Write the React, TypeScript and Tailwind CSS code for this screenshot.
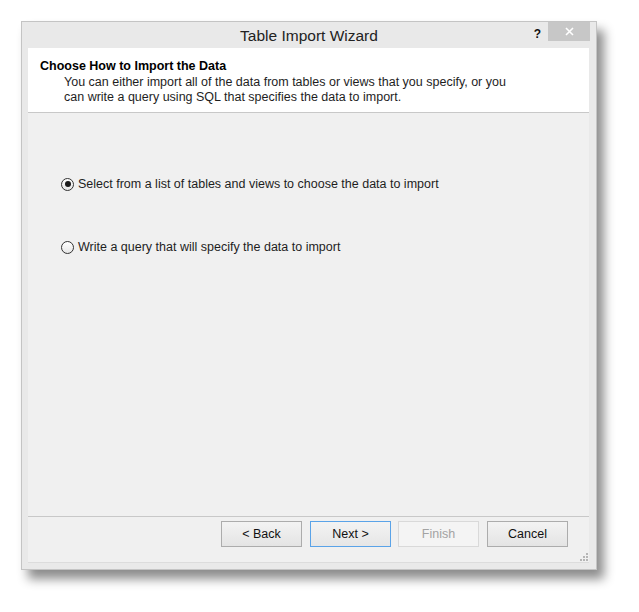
import * as React from "react"

const font = { fontFamily: '"Liberation Sans", "Noto Sans CJK SC", sans-serif' }

function Radio({ checked, label }: { checked?: boolean; label: string }) {
  return (
    <div className="flex items-center h-[16px]">
      <span className="w-[13px] h-[13px] rounded-full border border-[#333333] bg-gradient-to-b from-[#ffffff] to-[#e6e6e6] flex items-center justify-center">
        {checked && <span className="w-[6px] h-[6px] rounded-full bg-[#1a1a1a]" />}
      </span>
      <span className="ml-[4px] text-[12.5px] text-[#1e1e1e]">{label}</span>
    </div>
  )
}

function WizButton({ label, variant = "default", className = "" }: { label: string; variant?: "default" | "focus" | "disabled"; className?: string }) {
  const cls =
    variant === "disabled"
      ? "border-[#d9d9d9] bg-[#f4f4f4] text-[#a3a3a3]"
      : variant === "focus"
        ? "border-[#5aa3e8] bg-gradient-to-b from-[#f3f3f3] to-[#e6e6e6] text-[#111111]"
        : "border-[#acacac] bg-gradient-to-b from-[#f3f3f3] to-[#e4e4e4] text-[#111111]"
  return (
    <button className={"w-[81px] h-[26px] border text-[12.5px] flex items-center justify-center " + cls + " " + className}>
      {label}
    </button>
  )
}

export default function App() {
  return (
    <div className="w-[639px] h-[612px] bg-white pt-[21px] pl-[21px]" style={font}>
      <div className="w-[576px] h-[549px] border border-[#c4c4c4] bg-[#e9e9e9] flex flex-col shadow-[7px_9px_10px_rgba(0,0,0,0.45)]">
        {/* Title bar */}
        <div className="relative h-[26px] flex items-center justify-center">
          <span className="text-[15.5px] text-[#222222] mt-[2px]">Table Import Wizard</span>
          <span className="absolute right-[55px] top-[3px] text-[12px] font-bold text-[#111111]">?</span>
          <div className="absolute right-[6px] top-0 w-[42px] h-[19px] bg-[#c7c7c7] flex items-center justify-center">
            <svg width="9" height="9" viewBox="0 0 9 9">
              <path d="M1 1 L8 8 M8 1 L1 8" stroke="#ffffff" strokeWidth="1.6" />
            </svg>
          </div>
        </div>

        <div className="flex-1 ml-[6px] mr-[7px] mb-[6px] flex flex-col bg-[#f0f0f0] border-b border-[#dcdcdc]">
          {/* Header */}
          <div className="h-[65px] bg-white border-b border-[#c8c8c8] pl-[12px] pt-[11px] text-[12.5px] leading-[15.5px]">
            <div className="font-bold text-[#000000]">Choose How to Import the Data</div>
            <div className="pl-[24px] text-[#1e1e1e]">
              You can either import all of the data from tables or views that you specify, or you
              <br />
              can write a query using SQL that specifies the data to import.
            </div>
          </div>

          {/* Options */}
          <div className="flex-1 border-b border-[#c8c8c8] pl-[33px] pt-[63px] flex flex-col gap-[47px]">
            <Radio checked label="Select from a list of tables and views to choose the data to import" />
            <Radio label="Write a query that will specify the data to import" />
          </div>

          {/* Footer */}
          <div className="relative h-[45px] flex justify-end gap-[8px] pr-[21px] pt-[4px]">
            <WizButton label="< Back" />
            <WizButton label="Next >" variant="focus" className="-mr-[1px]" />
            <WizButton label="Finish" variant="disabled" />
            <WizButton label="Cancel" />
            <svg className="absolute right-[1px] bottom-[1px]" width="9" height="9" viewBox="0 0 9 9">
              <g fill="#b5b5b5">
                <rect x="7" y="1" width="2" height="2" />
                <rect x="4" y="4" width="2" height="2" />
                <rect x="7" y="4" width="2" height="2" />
                <rect x="1" y="7" width="2" height="2" />
                <rect x="4" y="7" width="2" height="2" />
                <rect x="7" y="7" width="2" height="2" />
              </g>
            </svg>
          </div>
        </div>
      </div>
    </div>
  )
}
